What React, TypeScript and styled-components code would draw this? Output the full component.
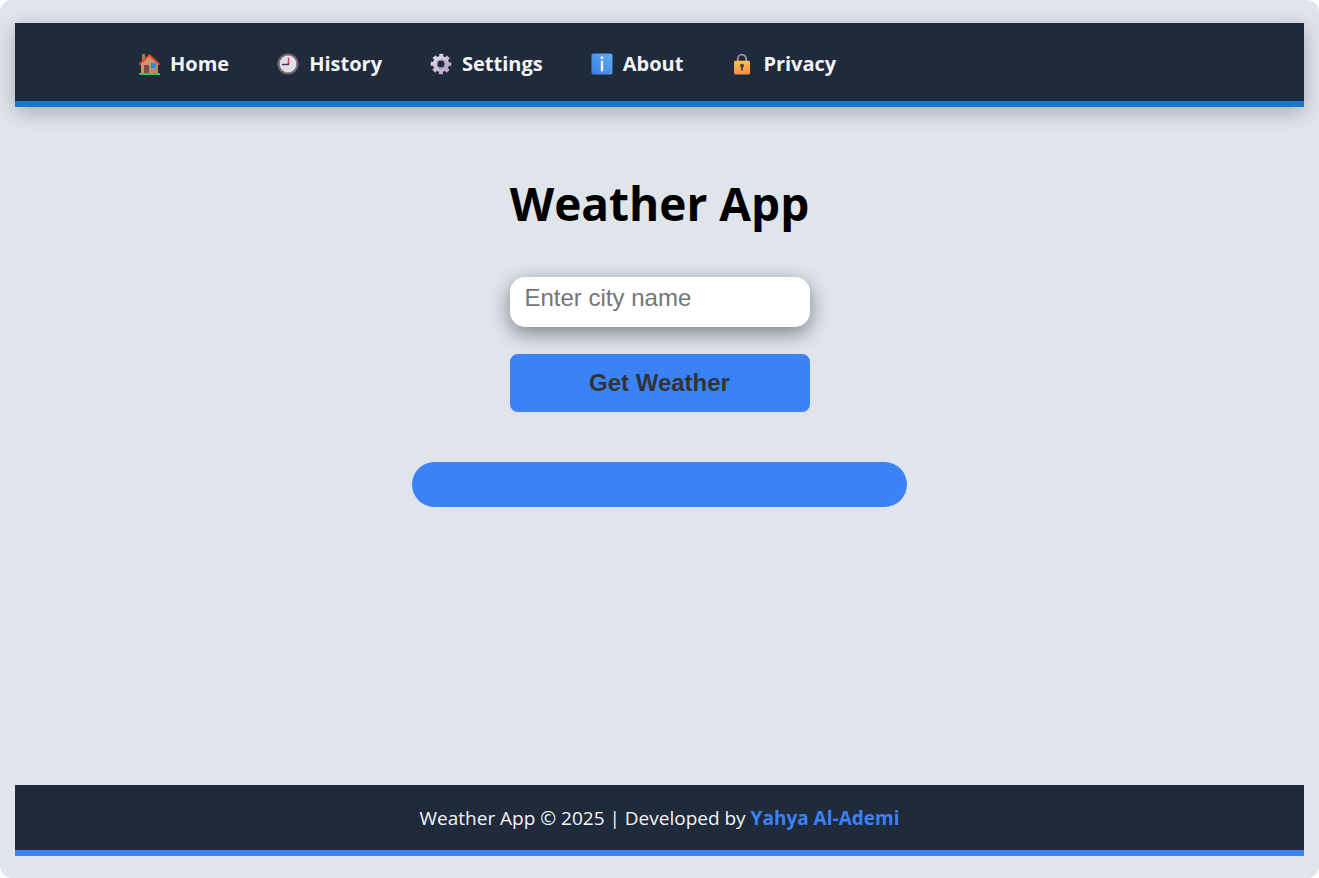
import React from 'react';
import styled, { createGlobalStyle } from 'styled-components';

const GlobalStyle = createGlobalStyle`
  *, *::before, *::after { box-sizing: border-box; }
  body {
    margin: 0;
    background: #ffffff;
    font-family: 'Segoe UI', 'Open Sans', 'Noto Sans', sans-serif;
  }
`;

const Page = styled.div`
  min-height: 100vh;
  display: flex;
  flex-direction: column;
  padding: 23px 15px 22px;
  background: #e0e4eb;
  border-radius: 12px;
`;

const Header = styled.header`
  background: #1f2a3b;
  border-bottom: 6px solid #1976d2;
  box-shadow: 0 5px 20px rgba(0, 0, 0, 0.25);
`;

const NavList = styled.ul`
  display: flex;
  flex-wrap: wrap;
  gap: 24px 48px;
  margin: 0;
  padding: 27px 123px 23px;
  list-style: none;
`;

const NavLink = styled.a`
  display: flex;
  align-items: center;
  gap: 10px;
  color: #f3f4f6;
  font-size: 20px;
  font-weight: 700;
  line-height: 28px;
  text-decoration: none;
`;

const Icon = styled.svg`
  display: block;
  flex: none;
  width: 22px;
  height: 22px;
`;

const Main = styled.main`
  flex: 1;
  display: flex;
  flex-direction: column;
  align-items: center;
  padding: 64px 0 48px;
`;

const Title = styled.h1`
  margin: 0 0 42px;
  color: #000000;
  font-size: 46px;
  font-weight: 700;
  line-height: 64px;
  text-align: center;
`;

const Form = styled.form`
  display: flex;
  flex-direction: column;
  gap: 27px;
  width: 300px;
  max-width: 100%;
`;

const CityInput = styled.input`
  width: 100%;
  height: 50px;
  padding: 0 15px 8px;
  border: none;
  border-radius: 15px;
  background: #ffffff;
  box-shadow: 0 6px 20px rgba(0, 0, 0, 0.45);
  color: #333333;
  font-family: 'Liberation Sans', Arial, sans-serif;
  font-size: 24px;
  &::placeholder { color: #757575; opacity: 1; }
`;

const SubmitButton = styled.button`
  width: 100%;
  height: 58px;
  padding: 0 16px;
  border: none;
  border-radius: 8px;
  background: #3b82f6;
  color: #333333;
  font-family: 'Liberation Sans', Arial, sans-serif;
  font-size: 24px;
  font-weight: 700;
  cursor: pointer;
`;

const Result = styled.section`
  width: 495px;
  max-width: 100%;
  min-height: 45px;
  margin-top: 50px;
  border-radius: 24px;
  background: #3b82f6;
`;

const Footer = styled.footer`
  padding: 19px 16px 18px;
  border-bottom: 6px solid #3b82f6;
  background: #1f2a3b;
  color: #f3f4f6;
  font-size: 19px;
  line-height: 28px;
  text-align: center;
`;

const AuthorLink = styled.a`
  color: #3b82f6;
  font-weight: 700;
  text-decoration: none;
`;

const HomeIcon = () => (
  <Icon viewBox="0 0 22 22" aria-hidden="true">
    <defs>
      <linearGradient id="wall" x1="0" y1="0" x2="1" y2="1">
        <stop offset="0" stopColor="#d9a47c" />
        <stop offset="1" stopColor="#b98259" />
      </linearGradient>
    </defs>
    <path d="M4 1h3v6H4z" fill="#b5745a" />
    <path d="M3 10.500 11.500 2.500 20 10.500V20.500H3z" fill="url(#wall)" />
    <path d="M6 12h5v8H6z" fill="#7d4a45" />
    <path d="M13 10h5v5h-5z" fill="#1593e6" />
    <path d="M1.800 11 11.500 2.200l9.200 8.800" fill="none" stroke="#ea4a31" strokeWidth="1.900" strokeLinecap="round" strokeLinejoin="round" />
    <path d="M1 20h21v2H1z" fill="#35c46a" />
  </Icon>
);

const ClockIcon = () => (
  <Icon viewBox="0 0 22 22" aria-hidden="true">
    <circle cx="11" cy="11" r="9.500" fill="#e3dfe8" stroke="#6f6b72" strokeWidth="2.200" />
    <path d="M11.500 4.500V11" stroke="#f0345f" strokeWidth="1.500" />
    <path d="M5.500 11.500h5.500" stroke="#4a3567" strokeWidth="1.500" strokeLinecap="round" />
    <circle cx="11.300" cy="11.300" r="1" fill="#4a3567" />
  </Icon>
);

const GearIcon = () => (
  <Icon viewBox="0 0 22 22" aria-hidden="true">
    <defs>
      <linearGradient id="gear" x1="0" y1="0" x2="1" y2="1">
        <stop offset="0" stopColor="#dedae3" />
        <stop offset="1" stopColor="#b8a2cf" />
      </linearGradient>
    </defs>
    <g fill="none" stroke="url(#gear)">
      <circle cx="11" cy="11" r="5.800" strokeWidth="4.600" />
      <circle cx="11" cy="11" r="8.700" strokeWidth="3.200" strokeDasharray="3.9 2.932" strokeDashoffset="1.950" />
    </g>
    <circle cx="11" cy="11" r="4" fill="none" stroke="#8a7d9b" strokeWidth="1" />
  </Icon>
);

const InfoIcon = () => (
  <Icon viewBox="0 0 22 22" aria-hidden="true">
    <defs>
      <linearGradient id="info" x1="1" y1="0" x2="0" y2="1">
        <stop offset="0" stopColor="#58aef9" />
        <stop offset="1" stopColor="#3f7fe0" />
      </linearGradient>
    </defs>
    <rect x="0.500" y="0.500" width="21" height="21" rx="2" fill="url(#info)" />
    <circle cx="11" cy="4.800" r="1.500" fill="#f4f2f8" />
    <path d="M11 8.800V17.200" fill="none" stroke="#f4f2f8" strokeWidth="2.400" strokeLinecap="round" />
  </Icon>
);

const LockIcon = () => (
  <Icon viewBox="0 0 22 22" aria-hidden="true">
    <defs>
      <linearGradient id="lock" x1="0" y1="0" x2="0" y2="1">
        <stop offset="0" stopColor="#fcc247" />
        <stop offset="1" stopColor="#f98b4e" />
      </linearGradient>
    </defs>
    <path d="M6.800 9V5.800a4.200 4.200 0 0 1 8.400 0V9" fill="none" stroke="#9b92a6" strokeWidth="1.900" />
    <rect x="3" y="7.800" width="16" height="13.700" rx="1.500" fill="url(#lock)" />
    <circle cx="11" cy="12.800" r="2" fill="#4c3a4c" />
    <path d="M11 13v4" stroke="#4c3a4c" strokeWidth="1.700" strokeLinecap="round" />
  </Icon>
);

const links = [
  { label: 'Home', Glyph: HomeIcon },
  { label: 'History', Glyph: ClockIcon },
  { label: 'Settings', Glyph: GearIcon },
  { label: 'About', Glyph: InfoIcon },
  { label: 'Privacy', Glyph: LockIcon },
];

export default function App() {
  return (
    <>
      <GlobalStyle />
      <Page>
        <Header>
          <nav aria-label="Main">
            <NavList>
              {links.map(({ label, Glyph }) => (
                <li key={label}>
                  <NavLink href={`#${label.toLowerCase()}`}>
                    <Glyph />
                    {label}
                  </NavLink>
                </li>
              ))}
            </NavList>
          </nav>
        </Header>
        <Main>
          <Title>Weather App</Title>
          <Form onSubmit={(event: React.FormEvent) => event.preventDefault()}>
            <CityInput type="text" aria-label="City name" placeholder="Enter city name" />
            <SubmitButton type="submit">Get Weather</SubmitButton>
          </Form>
          <Result aria-live="polite" />
        </Main>
        <Footer>
          Weather App © 2025 | Developed by <AuthorLink href="#author">Yahya Al-Ademi</AuthorLink>
        </Footer>
      </Page>
    </>
  );
}
